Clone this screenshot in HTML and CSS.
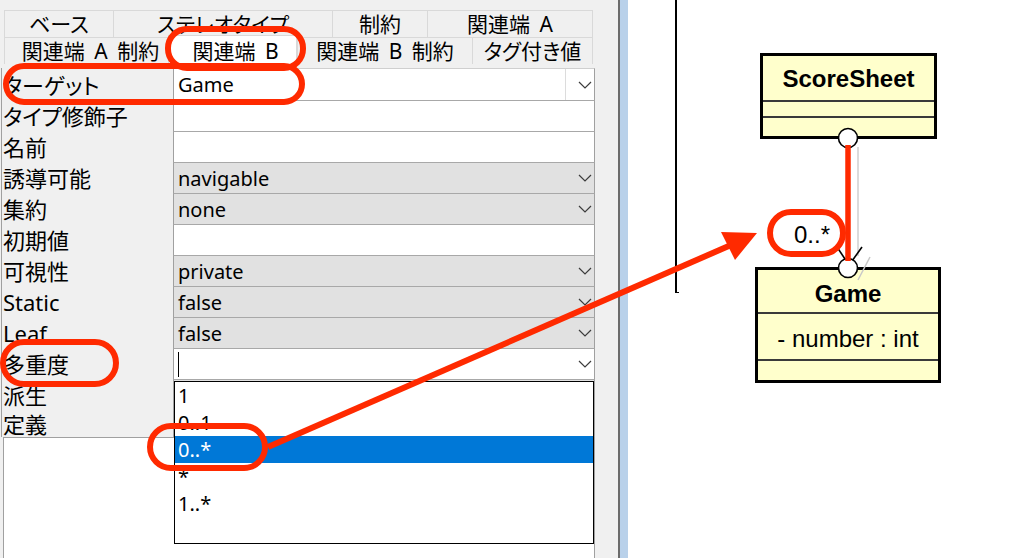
FILE: index.html
```html
<!DOCTYPE html>
<html lang="ja">
<head>
<meta charset="utf-8">
<title>関連端 B</title>
<link rel="stylesheet" href="styles.css">
</head>
<body>
<div class="app">
  <div class="panel">
    <div class="tabs">
      <div class="tabrow">
        <div class="tab t1">ベース</div>
        <div class="tab t2">ステレオタイプ</div>
        <div class="tab t3">制約</div>
        <div class="tab t4">関連端 A</div>
      </div>
      <div class="tabrow">
        <div class="tab t5">関連端 A 制約</div>
        <div class="tab t6 selected">関連端 B</div>
        <div class="tab t7">関連端 B 制約</div>
        <div class="tab t8">タグ付き値</div>
      </div>
    </div>
    <div class="grid">
      <div class="row first">
        <div class="label">ターゲット</div>
        <div class="value combo"><span class="vtext">Game</span><span class="btn"><svg class="chev" width="14" height="8" viewBox="0 0 14 8"><polyline points="1,1 7,7 13,1"/></svg></span></div>
      </div>
      <div class="row"><div class="label">タイプ修飾子</div><div class="value"></div></div>
      <div class="row"><div class="label">名前</div><div class="value"></div></div>
      <div class="row"><div class="label">誘導可能</div><div class="value dd"><span class="vtext">navigable</span><svg class="chev" width="14" height="8" viewBox="0 0 14 8"><polyline points="1,1 7,7 13,1"/></svg></div></div>
      <div class="row"><div class="label">集約</div><div class="value dd"><span class="vtext">none</span><svg class="chev" width="14" height="8" viewBox="0 0 14 8"><polyline points="1,1 7,7 13,1"/></svg></div></div>
      <div class="row"><div class="label">初期値</div><div class="value"></div></div>
      <div class="row"><div class="label">可視性</div><div class="value dd"><span class="vtext">private</span><svg class="chev" width="14" height="8" viewBox="0 0 14 8"><polyline points="1,1 7,7 13,1"/></svg></div></div>
      <div class="row"><div class="label">Static</div><div class="value dd"><span class="vtext">false</span><svg class="chev" width="14" height="8" viewBox="0 0 14 8"><polyline points="1,1 7,7 13,1"/></svg></div></div>
      <div class="row"><div class="label">Leaf</div><div class="value dd"><span class="vtext">false</span><svg class="chev" width="14" height="8" viewBox="0 0 14 8"><polyline points="1,1 7,7 13,1"/></svg></div></div>
      <div class="row"><div class="label">多重度</div><div class="value"><span class="caret"></span><svg class="chev" width="14" height="8" viewBox="0 0 14 8"><polyline points="1,1 7,7 13,1"/></svg></div></div>
      <div class="row"><div class="label">派生</div><div class="value dd"></div></div>
      <div class="row short"><div class="label">定義</div><div class="value"></div></div>
    </div>
    <div class="desc"></div>
  </div>
  <div class="splitter"></div>
  <div class="splitline"></div>
  <div class="bluebar"></div>
  <div class="canvas">
    <div class="vline"></div>
    <div class="cls scoresheet">
      <div class="cname">ScoreSheet</div>
      <div class="sep"></div>
      <div class="comp attr-s"></div>
      <div class="sep"></div>
      <div class="comp ops"></div>
    </div>
    <div class="cls game">
      <div class="cname gname">Game</div>
      <div class="sep"></div>
      <div class="comp attr">- number : int</div>
      <div class="sep"></div>
      <div class="comp ops"></div>
    </div>
    <svg class="assoc" width="396" height="558" viewBox="628 0 396 558">
      <line x1="858" y1="147" x2="858" y2="256" stroke="#cfcfcf" stroke-width="1.5"/>
      <line x1="870" y1="257" x2="858" y2="280" stroke="#c8c8c8" stroke-width="1.5"/>
      <line x1="837" y1="247" x2="845" y2="259" stroke="#000" stroke-width="1.6"/>
      <line x1="862" y1="247" x2="852" y2="261" stroke="#000" stroke-width="1.6"/>
      <circle cx="848" cy="138" r="9.5" fill="#fff" stroke="#000" stroke-width="1.6"/>
      <circle cx="848" cy="268" r="9.5" fill="#fff" stroke="#000" stroke-width="1.6"/>
    </svg>
    <div class="mult">0..*</div>
  </div>
  <ul class="droplist">
    <li>1</li>
    <li>0..1</li>
    <li class="sel">0..*</li>
    <li>*</li>
    <li>1..*</li>
  </ul>
  <svg class="annot" width="1024" height="558" viewBox="0 0 1024 558">
    <g fill="none" stroke="#ff2a00" stroke-width="6">
      <rect x="168" y="29" width="135" height="39" rx="19"/>
      <rect x="6" y="66" width="296" height="36" rx="18"/>
      <rect x="3" y="342" width="113" height="42" rx="21"/>
      <rect x="150" y="426" width="115" height="42" rx="21"/>
      <rect x="770" y="212" width="73" height="42" rx="21"/>
      <line x1="268" y1="447" x2="731" y2="245"/>
      <line x1="848" y1="145" x2="848" y2="261" stroke-width="5.5"/>
    </g>
    <polygon points="721,232 757,233 735,260" fill="#ff2a00"/>
  </svg>
</div>
</body>
</html>
```

FILE: styles.css
```css
* { box-sizing: border-box; }
html, body { margin: 0; padding: 0; }
body {
  width: 1024px;
  height: 558px;
  overflow: hidden;
  font-family: "Noto Sans", "Noto Sans CJK JP", sans-serif;
  font-feature-settings: "palt" 1;
  color: #000;
  background: #fff;
}
.app {
  position: relative;
  display: flex;
  width: 1024px;
  height: 558px;
}
.panel {
  width: 598px;
  height: 558px;
  background: #f0f0f0;
  display: flex;
  flex-direction: column;
}
.tabs {
  padding-top: 10px;
  padding-left: 4px;
  height: 68px;
  flex: none;
}
.tabrow {
  display: flex;
  height: 27px;
}
.tab {
  height: 27px;
  border-top: 1px solid #d9d9d9;
  border-left: 1px solid #d9d9d9;
  font-size: 21px;
  line-height: 27px;
  text-align: center;
  word-spacing: 4px;
  white-space: nowrap;
  background: #f0f0f0;
}
.tab:last-child { border-right: 1px solid #d9d9d9; }
.t1 { width: 109px; }
.t2 { width: 219px; }
.t3 { width: 95px; }
.t4 { width: 166px; }
.t5 { width: 164px; padding-left: 8px; }
.t6 { width: 129px; }
.t7 { width: 175px; }
.t8 { width: 121px; }
.tab.selected {
  background: #fff;
  margin-top: -2px;
  height: 30px;
  line-height: 31px;
  border-right: 1px solid #d9d9d9;
  padding-left: 6px;
}
.grid {
  margin-left: 1px;
  width: 594px;
  height: 369px;
  flex: none;
  border-left: 1px solid #a0a0a0;
}
.row {
  display: flex;
  height: 31px;
}
.row.first { height: 33px; }
.row.short { height: 26px; }
.label {
  width: 171px;
  padding-left: 1px;
  font-size: 22px;
  line-height: 31px;
  white-space: nowrap;
}
.row.first .label { line-height: 35px; }
.row.short .label { line-height: 26px; }
.value {
  flex: 1;
  display: flex;
  align-items: center;
  background: #fff;
  border-left: 1px solid #a0a0a0;
  border-right: 1px solid #a0a0a0;
  border-bottom: 1px solid #a8a8a8;
  padding-left: 4px;
  font-size: 20px;
}
.value.dd { background: #e1e1e1; }
.value.combo {
  border-top: 1px solid #cfcfcf;
  padding-right: 0;
}
.vtext { flex: 1; white-space: nowrap; }
.chev {
  margin-left: auto;
  margin-right: 2px;
  fill: none;
  stroke: #3c3c3c;
  stroke-width: 1.2;
}
.btn {
  width: 29px;
  height: 100%;
  border-left: 1px solid #dcdcdc;
  display: flex;
  align-items: center;
  justify-content: flex-end;
}
.caret {
  width: 1px;
  height: 25px;
  background: #000;
}
.desc {
  flex: 1;
  margin-left: 3px;
  width: 592px;
  background: #fff;
  border-top: 1px solid #a0a0a0;
  border-left: 1px solid #a0a0a0;
  border-right: 1px solid #a0a0a0;
}
.splitter { width: 20px; background: #f0f0f0; }
.splitline { width: 2px; background: #6b6b6b; }
.bluebar { width: 8px; background: #b9d1ea; }
.canvas {
  position: relative;
  flex: 1;
  height: 558px;
  background: #fff;
  font-family: "Liberation Sans", Arial, sans-serif;
}
.vline {
  position: absolute;
  left: 47px;
  top: 0;
  width: 2px;
  height: 293px;
  background: #000;
}
.vline::after {
  content: "";
  position: absolute;
  left: 0;
  bottom: 0;
  width: 4px;
  height: 1px;
  background: #000;
}
.cls {
  position: absolute;
  border: 3px solid #000;
  background: #ffffcc;
  display: flex;
  flex-direction: column;
}
.scoresheet { left: 132px; top: 53px; width: 177px; height: 86px; }
.game { left: 127px; top: 267px; width: 186px; height: 116px; }
.cname {
  font-weight: bold;
  font-size: 24px;
  text-align: center;
  height: 44px;
  line-height: 46px;
}
.gname { height: 42px; line-height: 48px; }
.sep { height: 2px; background: #3a3a3a; }
.comp.attr-s { height: 14px; }
.comp.attr {
  height: 45px;
  font-size: 24px;
  text-align: center;
  line-height: 50px;
}
.comp.ops { flex: 1; }
.assoc {
  position: absolute;
  left: 0;
  top: 0;
}
.mult {
  position: absolute;
  left: 166px;
  top: 221px;
  font-size: 24px;
  line-height: 28px;
}
.droplist {
  position: absolute;
  left: 174px;
  top: 381px;
  width: 420px;
  height: 163px;
  margin: 0;
  padding: 0;
  list-style: none;
  background: #fff;
  border: 1px solid #000;
  font-size: 20px;
}
.droplist li {
  height: 27px;
  line-height: 27px;
  padding-left: 3px;
}
.droplist li.sel {
  background: #0078d7;
  color: #fff;
}
.annot {
  position: absolute;
  left: 0;
  top: 0;
  pointer-events: none;
}
```
